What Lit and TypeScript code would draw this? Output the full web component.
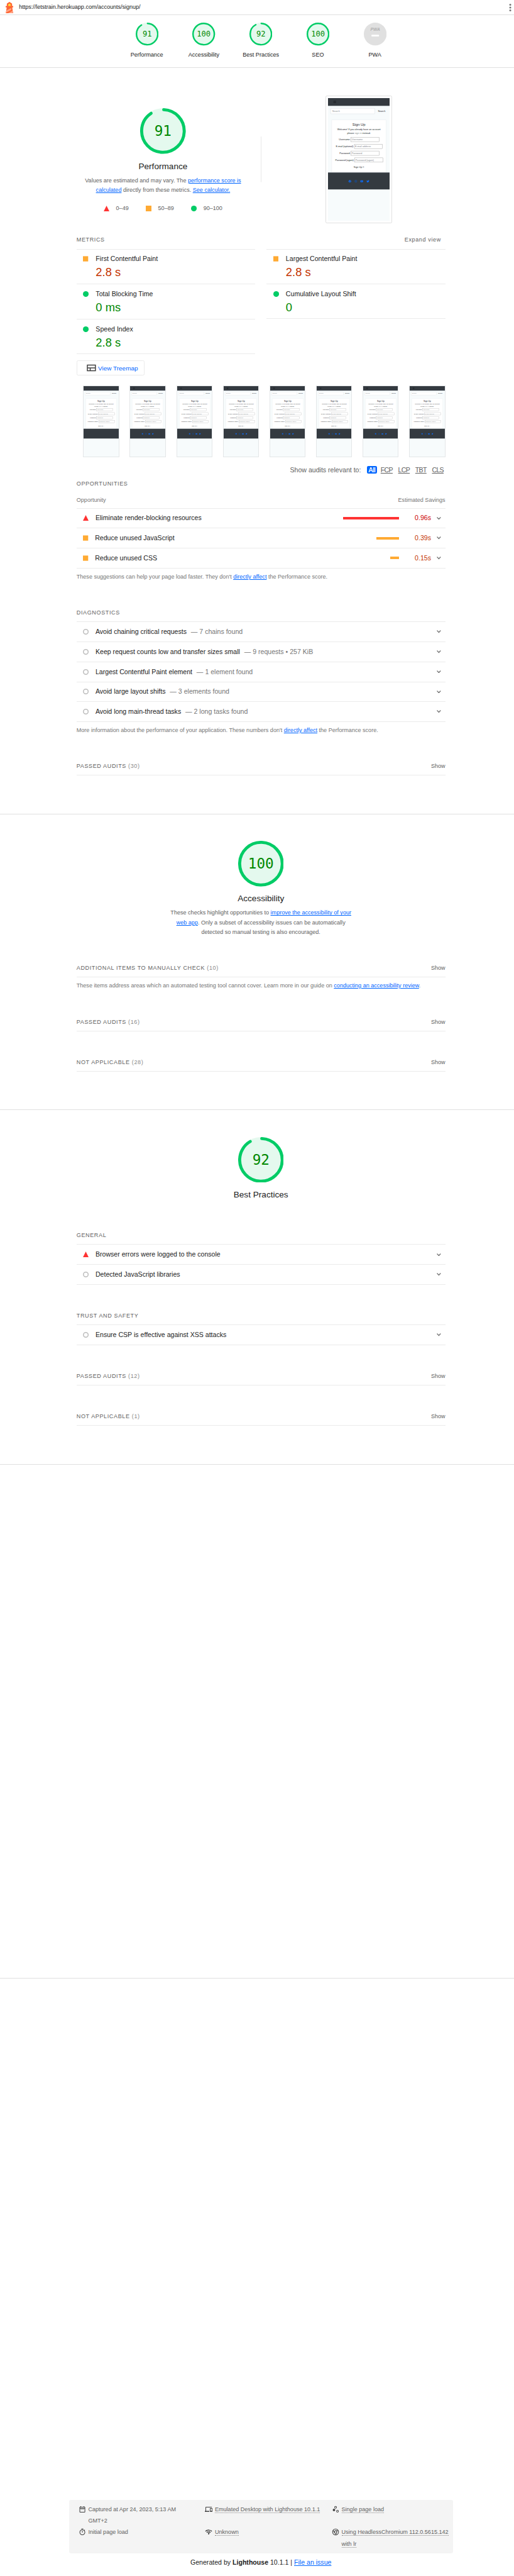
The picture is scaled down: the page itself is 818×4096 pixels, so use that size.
import { LitElement, html, svg, css, nothing } from "lit";
import { customElement, property } from "lit/decorators.js";

type Rating = "fail" | "average" | "pass" | "info";

const sans = css`"Liberation Sans", Arial, sans-serif`;

@customElement("score-gauge")
class ScoreGauge extends LitElement {
  @property({ type: Number }) score = 0;
  @property({ type: Number }) size = 96;
  static styles = css`
    :host { display: block; line-height: 0; }
    .base { fill: #e4f9ee; }
    .arc { fill: none; stroke: #0c6; stroke-width: 8; stroke-linecap: round; }
    .num { font-family: "DejaVu Sans Mono", monospace; fill: #080; text-anchor: middle; }
  `;
  render() {
    const c = 2 * Math.PI * 56;
    const full = this.score === 100;
    const len = full ? c : (c * this.score) / 100 - 4;
    const fs = this.size > 60 ? 37.5 : 40;
    return html`<svg width=${this.size} height=${this.size} viewBox="0 0 120 120">
      <circle class="base" cx="60" cy="60" r="60"></circle>
      <circle class="arc" cx="60" cy="60" r="56" transform="rotate(-87.9 60 60)" stroke-dasharray="${len} ${c}"></circle>
      <text class="num" x="60" y=${60 + fs * 0.355} font-size=${fs}>${this.score}</text>
    </svg>`;
  }
}

@customElement("rating-icon")
class RatingIcon extends LitElement {
  @property() rating: Rating = "info";
  @property({ type: Number }) square = 11;
  static styles = css`
    :host { display: block; line-height: 0; flex: none; }
  `;
  render() {
    if (this.rating === "average") {
      const s = this.square;
      return html`<svg width=${s} height="12" viewBox="0 0 ${s} 12"><rect y=${(12 - s) / 2} width=${s} height=${s} fill="#fa3"></rect></svg>`;
    }
    const shape =
      this.rating === "fail"
        ? svg`<path d="M6 0L12 12H0z" fill="#f33"></path>`
        : this.rating === "pass"
          ? svg`<circle cx="6" cy="6" r="6" fill="#0c6"></circle>`
          : svg`<circle cx="6" cy="6" r="5" fill="none" stroke="#bdbdbd" stroke-width="2"></circle>`;
    return html`<svg width="12" height="12" viewBox="0 0 12 12">${shape}</svg>`;
  }
}

@customElement("page-shot")
class PageShot extends LitElement {
  @property({ type: Number }) w = 130;
  @property({ type: Number }) h = 258;
  @property({ type: Boolean }) bare = false;
  static styles = css`
    :host { display: block; line-height: 0; }
    text { font-family: "Liberation Sans", Arial, sans-serif; font-size: 5px; fill: #212529; }
    .ph { fill: #85898d; }
    .title { font-size: 7.7px; }
    .mid { text-anchor: middle; }
    .end { text-anchor: end; }
    .box { fill: #fff; stroke: #8a8a8a; stroke-width: 0.5; }
  `;
  private row(label: string, hint: string, x: number, y: number) {
    return svg`<text class="end" x=${x - 1.2} y=${y + 6.2}>${label}</text>
      <rect class="box" x=${x} y=${y} width="59" height="9.2"></rect>
      <text class="ph" x=${x + 1.4} y=${y + 6.2}>${hint}</text>`;
  }
  render() {
    return html`<svg width=${this.w} height=${this.h} viewBox="0 0 130 258" preserveAspectRatio="none">
      <rect width="130" height="258" fill="#f7fbfc"></rect>
      <rect width="130" height="16.2" fill="#343a40"></rect>
      <rect y="16" width="130" height="0.8" fill="#b4b9c0"></rect>
      ${this.bare ? nothing : svg`<path d="M11.5 6.2h5.5M11.5 8h5.5M11.5 9.8h5.5" stroke="#1d2125" stroke-width="1"></path>`}
      <rect x="5.5" y="21.5" width="93" height="11.5" rx="1" fill="#fff" stroke="#ced4da" stroke-width="0.5"></rect>
      <text class="ph" x="9" y="28.8">Search</text>
      <text x="105" y="28.8">Search</text>
      <path d="M7.7 156V46.5q0-1 1-1h112.6q1 0 1 1V156" fill="#fff" stroke="#dfe3e6" stroke-width="0.5"></path>
      <text class="title mid" x="65" y="58">Sign Up</text>
      <text class="mid" x="65" y="67.4">Welcome! If you already have an account</text>
      <text class="mid" x="65" y="75">please <tspan class="ph">sign in</tspan> instead.</text>
      ${this.row("Username:", "Username", 48.5, 82.2)}
      ${this.row("E-mail (optional):", "E-mail address", 55.5, 96.8)}
      ${this.row("Password:", "Password", 48.5, 111.2)}
      ${this.row("Password (again):", "Password (again)", 56.5, 125.5)}
      <text class="mid" x="65" y="147">Sign Up »</text>
      <rect y="156" width="130" height="36" fill="#343a40"></rect>
      <rect y="155.8" width="130" height="0.8" fill="#c5cad0"></rect>
      ${this.bare
        ? nothing
        : svg`<circle cx="46" cy="174.8" r="2.6" fill="#0d6efd"></circle>
      <path d="M46.3 177.4v-3.6q0-.8 1-.7M45.2 175.2h2" stroke="#343a40" stroke-width=".7" fill="none"></path>
      <rect x="56.4" y="172.7" width="4.2" height="4.2" rx="1.2" fill="none" stroke="#0b55c0" stroke-width=".7"></rect>
      <circle cx="58.5" cy="174.8" r="1" fill="none" stroke="#0b55c0" stroke-width=".6"></circle>
      <rect x="68.2" y="172.8" width="5.6" height="4" rx="1.2" fill="#0d6efd"></rect>
      <path d="M70.4 173.9l1.8.9-1.8.9z" fill="#343a40"></path>
      <path d="M81.4 173q1.2 1.2 2.5 1.2-.1-1.6 1.2-1.7.6 0 1 .4l.8-.2-.5.8q.1 2.600-2 3.500-1.600.6-3.100-.2 1 0 1.500-.5-.9-.2-1.100-.9-.6-.8-.300-2.400z" fill="#0d6efd"></path>`}
    </svg>`;
  }
}

const icons = {
  date: svg`<path d="M7 11h2v2H7v-2zm14-5v14a2 2 0 01-2 2H5a2 2 0 01-2-2l.01-14c0-1.1.88-2 1.99-2h1V2h2v2h8V2h2v2h1a2 2 0 012 2zM5 8h14V6H5v2zm14 12V10H5v10h14zm-4-7h2v-2h-2v2zm-4 0h2v-2h-2v2z"></path>`,
  devices: svg`<path d="M4 6h18V4H4c-1.100 0-2 .9-2 2v11H0v3h14v-3H4V6zm19 2h-6c-.55 0-1 .45-1 1v10c0 .55.45 1 1 1h6c.55 0 1-.45 1-1V9c0-.55-.45-1-1-1zm-1 9h-4v-7h4v7z"></path>`,
  samples: svg`<circle cx="7" cy="14" r="4"></circle><circle cx="12" cy="5.500" r="3" fill="none" stroke="currentColor" stroke-width="2"></circle><circle cx="18" cy="18" r="3" fill="none" stroke="currentColor" stroke-width="2"></circle>`,
  timer: svg`<path d="M15 1H9v2h6V1zm-4 13h2V8h-2v6zm8.030-6.610l1.420-1.420c-.43-.51-.9-.99-1.410-1.410l-1.420 1.420C16.070 4.740 14.120 4 12 4c-4.970 0-9 4.030-9 9s4.020 9 9 9 9-4.030 9-9c0-2.120-.74-4.070-1.970-5.610zM12 20c-3.870 0-7-3.130-7-7s3.130-7 7-7 7 3.130 7 7-3.130 7-7 7z"></path>`,
  network: svg`<path d="M15.9 5c-.17 0-.32.09-.41.23l-.07.15-5.18 11.65c-.16.29-.26.61-.26.96 0 1.11.9 2.01 2.01 2.01.96 0 1.77-.68 1.96-1.59l.01-.03L16.4 5.5c0-.28-.22-.5-.5-.5zM1 9l2 2c2.88-2.88 6.79-4.08 10.53-3.62l1.19-2.68C9.89 3.84 4.74 5.27 1 9zm20 2l2-2c-1.64-1.64-3.55-2.82-5.59-3.57l-.53 2.82c1.5.62 2.9 1.53 4.12 2.75zm-4 4l2-2c-.8-.8-1.7-1.42-2.66-1.89l-.55 2.92c.42.27.83.59 1.21.97zM5 13l2 2a7.1 7.1 0 0 1 4.03-2l1.28-2.88c-2.63-.08-5.3.87-7.31 2.88z"></path>`,
  chrome: svg`<g fill="none" stroke="currentColor" stroke-width="2"><circle cx="12" cy="12" r="9.500"></circle><circle cx="12" cy="12" r="4"></circle><path d="M12 8h8.500M8.540 14l-4.300-7.400M15.460 14l-4.300 7.400"></path></g>`,
};

@customElement("app-root")
class AppRoot extends LitElement {
  static styles = css`
    :host { display: block; background: #fff; overflow: hidden; height: 4096px; }
    * { box-sizing: border-box; }
    .page { zoom: 0.7563; font: 12px/20px ${sans}; color: #212121; white-space: nowrap; height: 5416px; }
    svg { display: block; flex: none; }
    a { color: #06f; text-decoration: underline; }
    .topbar { display: flex; align-items: center; height: 32px; border-bottom: 1px solid #e0e0e0; padding: 0 0 0 12px; }
    .url { margin-left: 12px; flex: 1; letter-spacing: -0.03px; }
    .scores { display: flex; height: 111px; padding: 16px 0 0 249px; border-bottom: 1px solid #e0e0e0; }
    .score { width: 120px; display: flex; flex-direction: column; align-items: center; gap: 10px; }
    .category { border-bottom: 1px solid #e0e0e0; padding-left: 161px; }
    .perf { height: 1569px; }
    .a11y { height: 622px; padding-top: 56px; }
    .bp { height: 745px; padding-top: 56px; }
    .seo { height: 1081px; }
    .pwa { height: 1096px; }
    .inner { width: 776px; }
    .hero { display: grid; grid-template-columns: 388px 388px; gap: 24px; margin-left: -12px; width: 800px; height: 352px; background: linear-gradient(#e0e0e0, #e0e0e0) no-repeat 400px 144px / 1px 96px; }
    .lead { display: flex; flex-direction: column; align-items: center; text-align: center; }
    .hero .lead { padding-top: 85px; }
    .name { font-size: 18px; line-height: 24px; margin-top: 14px; }
    .blurb { margin-top: 8px; color: #616161; min-height: 0; }
    .legend { display: flex; align-items: center; color: #616161; margin-top: 18px; gap: 36px; }
    .legend > span { display: flex; align-items: center; gap: 14px; }
    .frame { margin: 58px auto 0; align-self: start; border: 1px solid #e0e0e0; border-radius: 3px; padding: 4px; width: 140px; height: 268px; }
    .head { display: flex; justify-content: space-between; color: #616161; height: 28px; }
    .head .t { letter-spacing: 0.8px; text-transform: uppercase; }
    .head .n { color: #8a8a8a; }
    .head .exp { letter-spacing: 0.8px; margin-right: 9px; }
    .clump { margin-top: 56px; }
    .closed { border-bottom: 1px solid #ebebeb; height: 29px; }
    .metrics { display: grid; grid-template-columns: 376px 376px; gap: 24px; }
    .metric { height: 74px; border-top: 1px solid #ebebeb; padding: 10px 0 0 14px; display: grid; grid-template-columns: 26.5px 1fr; align-content: start; align-items: center; font-size: 14px; }
    .metric:last-child { border-bottom: 1px solid #ebebeb; }
    .metric b { grid-column: 2; font-weight: 400; font-size: 24.3px; line-height: 30px; margin-top: 4px; }
    .average-t { color: #c33300; }
    .pass-t { color: #080; }
    .fail-t { color: #c00; }
    .treemap { margin-top: 13px; width: 143px; height: 32px; border: 1px solid #ebebeb; border-radius: 3px; display: flex; align-items: center; gap: 3px; padding-left: 17px; color: #06f; font-size: 13.2px; }
    .strip { display: flex; justify-content: space-between; margin: 21px 0 0 14px; height: 150px; }
    .thumb { width: 76px; height: 150px; border: 1px solid #e4e6e8; overflow: hidden; }
    .filter { display: flex; justify-content: flex-end; align-items: center; gap: 4px; margin-top: 17px; font-size: 14px; color: #616161; height: 20px; }
    .filter .lbl { margin-right: 8px; }
    .chip { padding: 0 3.500px 0 4px; letter-spacing: -0.9px; text-decoration: underline; }
    .chip.on { background: #06f; color: #fff; border-radius: 3px; line-height: 16px; height: 16px; text-decoration: none; letter-spacing: -0.5px; -webkit-text-stroke: 0.3px #fff; }
    .opp { margin-top: 10px; }
    .cols { display: flex; justify-content: space-between; color: #757575; height: 26px; margin-top: -6px; }
    .opp .head { height: 40px; }
    .cols + .audits { margin-top: 0; }
    .opp .cols { margin-top: -6px; }
    .audit { display: flex; align-items: center; height: 42px; border-top: 1px solid #ebebeb; padding: 0 9px 0 14px; font-size: 14px; }
    .audit:last-child { height: 43px; border-bottom: 1px solid #ebebeb; }
    .audit .txt { margin-left: 14px; flex: 1; }
    .audit .sub { color: #757575; margin-left: 9px; }
    .bar { height: 5px; }
    .bar.fail { background: #f33; }
    .bar.average { background: #fa3; }
    .save { width: 68px; text-align: right; margin-right: 12px; }
    .note { margin-top: 8px; color: #757575; }
    .metaitems { display: grid; grid-template-columns: 266.5px 266.5px 1fr; grid-auto-rows: 48px; margin-left: 145px; width: 808px; height: 112px; background: #f4f4f4; border-radius: 4px; padding: 8px 0 8px 20px; color: #616161; line-height: 24px; }
    .meta { display: flex; gap: 4.700px; color: #424242; }
    .meta svg { margin-top: 4px; }
    .meta span { color: #616161; }
    .dot { border-bottom: 1px dotted #8a8a8a; }
    .gen { text-align: center; width: 808px; margin: 10px 0 0 145px; font-size: 14px; }
  `;

  private head(t: string, n?: number, closed = false) {
    return html`<div class="head ${closed ? "closed clump" : ""}">
      <span class="t">${t}${n !== undefined ? html` <span class="n">(${n})</span>` : nothing}</span>
      ${closed ? html`<span>Show</span>` : nothing}
    </div>`;
  }

  private audit(r: Rating, title: string, sub?: string, bar?: number, save?: string) {
    return html`<div class="audit">
      <rating-icon .rating=${r}></rating-icon>
      <span class="txt">${title}${sub ? html`<span class="sub">— ${sub}</span>` : nothing}</span>
      ${bar ? html`<div class="bar ${r}" style="width:${bar}px"></div><span class="save ${r}-t">${save}</span>` : nothing}
      <svg width="9" height="6" viewBox="0 0 9 6"><path d="M0.700 0.700L4.500 4.700L8.300 0.700" fill="none" stroke="#757575" stroke-width="1.700"></path></svg>
    </div>`;
  }

  private metric(r: Rating, title: string, value: string) {
    return html`<div class="metric"><rating-icon .rating=${r}></rating-icon><span>${title}</span><b class="${r}-t">${value}</b></div>`;
  }

  private meta(icon: unknown, text: unknown, dotted = true) {
    return html`<div class="meta"><svg width="16" height="16" viewBox="0 0 24 24" fill="currentColor">${icon}</svg><div><span class=${dotted ? "dot" : ""}>${text}</span></div></div>`;
  }

  render() {
    const nav: [string, number][] = [["Performance", 91], ["Accessibility", 100], ["Best Practices", 92], ["SEO", 100]];
    return html`<div class="page">
      <div class="topbar">
        <svg width="16" height="24" viewBox="6 3 12 18">
          <path d="M12 3l4.125 2.625v3.750H18v2.250h-1.688l1.500 9.375H6.188l1.500-9.375H6v-2.250h1.875V5.648z" fill="#f63"></path>
          <path d="M12 5.670l-1.900 1.200v2.500h3.800v-2.500z" fill="#ffe135"></path>
          <path d="M14.500 12.600L7.200 16.600l-.5 3.300 8.400-4.600zM16.700 17.100L9.600 21h7.700z" fill="#ffa385"></path>
        </svg>
        <span class="url">https://letstrain.herokuapp.com/accounts/signup/</span>
        <svg width="20" height="24" viewBox="0 0 20 24" fill="#757575"><circle cx="12" cy="6" r="2"></circle><circle cx="12" cy="12" r="2"></circle><circle cx="12" cy="18" r="2"></circle></svg>
      </div>
      <div class="scores">
        ${nav.map(([n, s]) => html`<div class="score"><score-gauge .score=${s} .size=${48}></score-gauge><span>${n}</span></div>`)}
        <div class="score">
          <svg width="48" height="48" viewBox="0 0 48 48">
            <circle cx="24" cy="24" r="24" fill="#e0e0e0"></circle>
            <text x="24" y="16.800" text-anchor="middle" font-family="Liberation Sans, Arial, sans-serif" font-weight="700" font-style="italic" font-size="9" fill="#b0b0b0" textLength="20" lengthAdjust="spacingAndGlyphs">PWA</text>
            <rect x="16" y="25.500" width="16" height="3.500" rx="1" fill="#fff"></rect>
          </svg>
          <span>PWA</span>
        </div>
      </div>

      <section class="category perf"><div class="inner">
        <div class="hero">
          <div class="lead">
            <score-gauge .score=${91}></score-gauge>
            <div class="name">Performance</div>
            <div class="blurb">Values are estimated and may vary. The <a>performance score is<br />calculated</a> directly from these metrics. <a>See calculator.</a></div>
            <div class="legend">
              <span><rating-icon rating="fail"></rating-icon>0–49</span>
              <span><rating-icon rating="average" square="12"></rating-icon>50–89</span>
              <span><rating-icon rating="pass"></rating-icon>90–100</span>
            </div>
          </div>
          <div class="frame"><page-shot></page-shot></div>
        </div>
        <div class="head"><span class="t">Metrics</span><span class="exp">Expand view</span></div>
        <div class="metrics">
          <div>
            ${this.metric("average", "First Contentful Paint", "2.8 s")}
            ${this.metric("pass", "Total Blocking Time", "0 ms")}
            ${this.metric("pass", "Speed Index", "2.8 s")}
          </div>
          <div>
            ${this.metric("average", "Largest Contentful Paint", "2.8 s")}
            ${this.metric("pass", "Cumulative Layout Shift", "0")}
          </div>
        </div>
        <div class="treemap"><svg width="24" height="24" viewBox="0 0 24 24" fill="#424242"><path d="M3 5v14h19V5H3zm2 2h15v4H5V7zm0 10v-4h4v4H5zm6 0v-4h9v4h-9z"></path></svg>View Treemap</div>
        <div class="strip">${[0, 1, 2, 3, 4, 5, 6, 7].map((i) => html`<div class="thumb"><page-shot .w=${74} .h=${148} .bare=${i === 0}></page-shot></div>`)}</div>
        <div class="filter"><span class="lbl">Show audits relevant to:</span><span class="chip on">All</span>${["FCP", "LCP", "TBT", "CLS"].map((c) => html`<span class="chip">${c}</span>`)}</div>
        <div class="opp">
          ${this.head("Opportunities")}
          <div class="cols"><span>Opportunity</span><span>Estimated Savings</span></div>
          <div class="audits">
            ${this.audit("fail", "Eliminate render-blocking resources", undefined, 117, "0.96s")}
            ${this.audit("average", "Reduce unused JavaScript", undefined, 47, "0.39s")}
            ${this.audit("average", "Reduce unused CSS", undefined, 18, "0.15s")}
          </div>
          <div class="note">These suggestions can help your page load faster. They don't <a>directly affect</a> the Performance score.</div>
        </div>
        <div class="clump">
          ${this.head("Diagnostics")}
          <div class="audits">
            ${this.audit("info", "Avoid chaining critical requests", "7 chains found")}
            ${this.audit("info", "Keep request counts low and transfer sizes small", "9 requests • 257 KiB")}
            ${this.audit("info", "Largest Contentful Paint element", "1 element found")}
            ${this.audit("info", "Avoid large layout shifts", "3 elements found")}
            ${this.audit("info", "Avoid long main-thread tasks", "2 long tasks found")}
          </div>
          <div class="note">More information about the performance of your application. These numbers don't <a>directly affect</a> the Performance score.</div>
        </div>
        ${this.head("Passed audits", 30, true)}
      </div></section>

      <section class="category a11y"><div class="inner">
        <div class="lead">
          <score-gauge .score=${100}></score-gauge>
          <div class="name">Accessibility</div>
          <div class="blurb">These checks highlight opportunities to <a>improve the accessibility of your<br />web app</a>. Only a subset of accessibility issues can be automatically<br />detected so manual testing is also encouraged.</div>
        </div>
        ${this.head("Additional items to manually check", 10, true)}
        <div class="note">These items address areas which an automated testing tool cannot cover. Learn more in our guide on <a>conducting an accessibility review</a>.</div>
        ${this.head("Passed audits", 16, true)}
        ${this.head("Not applicable", 28, true)}
      </div></section>

      <section class="category bp"><div class="inner">
        <div class="lead">
          <score-gauge .score=${92}></score-gauge>
          <div class="name">Best Practices</div>
          <div class="blurb"></div>
        </div>
        <div class="clump">
          ${this.head("General")}
          <div class="audits">
            ${this.audit("fail", "Browser errors were logged to the console")}
            ${this.audit("info", "Detected JavaScript libraries")}
          </div>
        </div>
        <div class="clump">
          ${this.head("Trust and Safety")}
          <div class="audits">${this.audit("info", "Ensure CSP is effective against XSS attacks")}</div>
        </div>
        ${this.head("Passed audits", 12, true)}
        ${this.head("Not applicable", 1, true)}
      </div></section>

      <section class="category seo"></section>
      <section class="pwa"></section>

      <footer>
        <div class="metaitems">
          ${this.meta(icons.date, html`Captured at Apr 24, 2023, 5:13 AM<br />GMT+2`, false)}
          ${this.meta(icons.devices, "Emulated Desktop with Lighthouse 10.1.1")}
          ${this.meta(icons.samples, "Single page load")}
          ${this.meta(icons.timer, "Initial page load", false)}
          ${this.meta(icons.network, "Unknown")}
          ${this.meta(icons.chrome, html`Using HeadlessChromium 112.0.5615.142<br />with lr`)}
        </div>
        <div class="gen">Generated by <b>Lighthouse</b> 10.1.1 | <a>File an issue</a></div>
      </footer>
    </div>`;
  }
}
